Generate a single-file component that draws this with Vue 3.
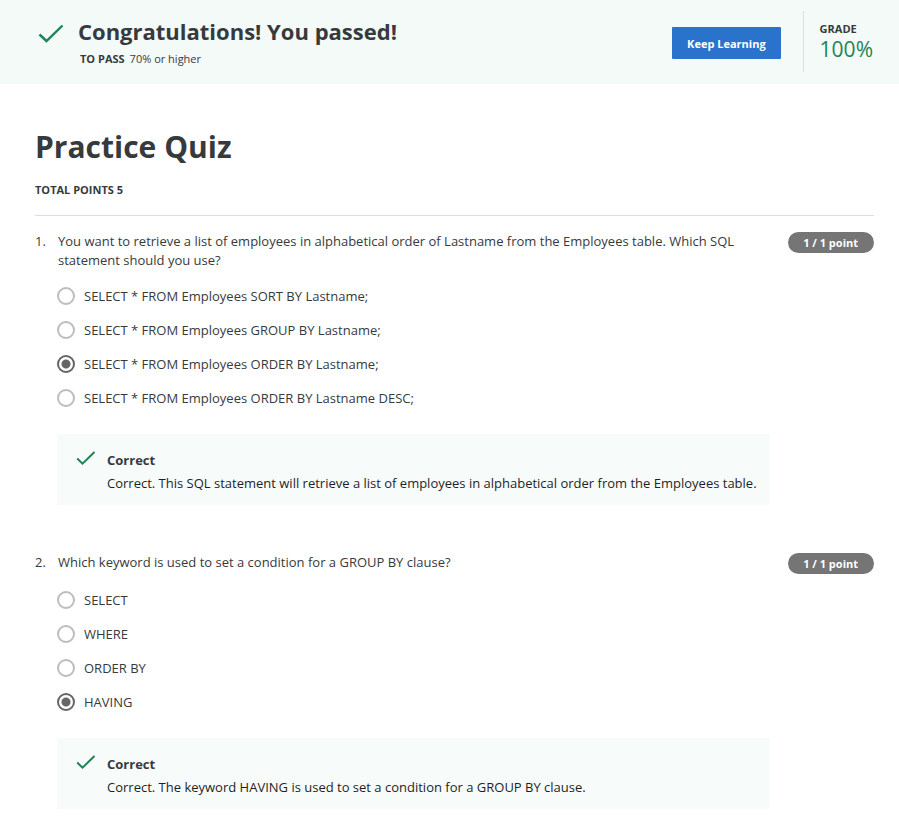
<script setup>
import { ref } from 'vue'

const questions = ref([
  {
    id: 1,
    prompt:
      'You want to retrieve a list of employees in alphabetical order of Lastname from the Employees table. Which SQL statement should you use?',
    options: [
      'SELECT * FROM Employees SORT BY Lastname;',
      'SELECT * FROM Employees GROUP BY Lastname;',
      'SELECT * FROM Employees ORDER BY Lastname;',
      'SELECT * FROM Employees ORDER BY Lastname DESC;',
    ],
    selected: 2,
    feedback:
      'Correct. This SQL statement will retrieve a list of employees in alphabetical order from the Employees table.',
  },
  {
    id: 2,
    prompt: 'Which keyword is used to set a condition for a GROUP BY clause?',
    options: ['SELECT', 'WHERE', 'ORDER BY', 'HAVING'],
    selected: 3,
    feedback: 'Correct. The keyword HAVING is used to set a condition for a GROUP BY clause.',
  },
])
</script>

<template>
  <div class="page">
    <header class="banner">
      <svg class="banner-check" viewBox="0 0 26 20" aria-hidden="true">
        <path d="M1.5 10.5 L8.5 17 L24.5 1.5" />
      </svg>
      <div class="banner-text">
        <h2>Congratulations! You passed!</h2>
        <p><strong>TO PASS</strong><span>70% or higher</span></p>
      </div>
      <button type="button" class="keep">Keep Learning</button>
      <div class="grade">
        <span class="grade-label">GRADE</span>
        <span class="grade-value">100%</span>
      </div>
    </header>

    <main class="quiz">
      <h1>Practice Quiz</h1>
      <p class="total">TOTAL POINTS 5</p>

      <section v-for="q in questions" :key="q.id" class="question">
        <div class="number">{{ q.id }}.</div>
        <p :id="`prompt-${q.id}`" class="prompt">{{ q.prompt }}</p>
        <div class="points"><span class="pill">1 / 1 point</span></div>
        <div class="answer">
          <div class="options" role="radiogroup" :aria-labelledby="`prompt-${q.id}`">
            <label v-for="(option, i) in q.options" :key="i" class="option" :for="`q${q.id}-${i}`">
              <input :id="`q${q.id}-${i}`" v-model="q.selected" type="radio" :name="`q${q.id}`" :value="i" />
              <span>{{ option }}</span>
            </label>
          </div>
          <div class="feedback">
            <svg class="check" viewBox="0 0 20 16" aria-hidden="true">
              <path d="M1.2 8.5 L6.5 13.7 L18.5 2" />
            </svg>
            <div>
              <strong>Correct</strong>
              <p>{{ q.feedback }}</p>
            </div>
          </div>
        </div>
      </section>
    </main>
  </div>
</template>

<style>
body {
  margin: 0;
  background: #fff;
}
</style>

<style scoped>
.page {
  font-family: "Open Sans", "Noto Sans", sans-serif;
  font-size: 13px;
  line-height: 19px;
  color: #373a3c;
}

h1,
h2,
p {
  margin: 0;
}

.banner {
  display: flex;
  align-items: flex-start;
  padding: 11px 26px 12px 38px;
  background: #f3faf8;
}

.banner-check {
  width: 26px;
  height: 20px;
  margin: 13px 14px 0 0;
  flex: none;
}

.banner-check path,
.check path {
  fill: none;
  stroke: #1f8354;
}

.banner-check path {
  stroke-width: 2.4;
}

.banner-text {
  flex: 1;
  padding-top: 5px;
}

h2 {
  font-size: 22px;
  line-height: 30px;
  font-weight: 700;
}

.banner-text p {
  display: flex;
  gap: 5px;
  padding: 4px 0 0 2px;
  font-size: 11px;
  line-height: 18px;
}

.keep {
  height: 32px;
  margin: 16px 22px 0 0;
  padding: 1px 15px 0;
  border: 0;
  border-radius: 1px;
  background: #2a73cc;
  color: #fff;
  font-family: inherit;
  font-size: 11px;
  font-weight: 700;
  cursor: pointer;
}

.grade {
  display: flex;
  flex-direction: column;
  box-sizing: border-box;
  height: 61px;
  padding: 10px 0 0 16px;
  border-left: 1px solid #dcdfde;
}

.grade-label {
  font-size: 11px;
  line-height: 16px;
  font-weight: 700;
}

.grade-value {
  font-size: 21px;
  line-height: 24px;
  color: #1f8354;
}

.quiz {
  padding: 42px 25px 16px 35px;
}

h1 {
  font-size: 30px;
  line-height: 42px;
  font-weight: 700;
}

.total {
  padding: 13px 0 16px;
  border-bottom: 1px solid #dedede;
  font-size: 11px;
  line-height: 18px;
  font-weight: 700;
}

.question {
  display: grid;
  grid-template-columns: 22px minmax(0, 1fr) auto;
  padding-top: 16px;
}

.question + .question {
  padding-top: 48px;
}

.prompt {
  padding: 0 16px 0 1px;
}

.points {
  padding-left: 18px;
}

.pill {
  display: block;
  padding: 0 16px 0 15px;
  border-radius: 11px;
  background: #757575;
  color: #fff;
  font-size: 11px;
  font-weight: 700;
  line-height: 21px;
}

.answer {
  grid-column: 2;
  padding-top: 9px;
}

.option {
  display: flex;
  align-items: center;
  gap: 9px;
  height: 34px;
  cursor: pointer;
}

.option input {
  appearance: none;
  box-sizing: border-box;
  width: 18px;
  height: 18px;
  margin: 0;
  border: 2px solid #bdbdbd;
  border-radius: 50%;
  background: #fff;
  flex: none;
}

.option input:checked {
  border-color: #666;
  background: radial-gradient(circle, #666 4px, #fff 5px);
}

.feedback {
  display: flex;
  gap: 11px;
  margin-top: 19px;
  padding: 16px 8px 10px 19px;
  background: #f7fbfa;
}

.check {
  width: 20px;
  height: 16px;
  flex: none;
}

.check path {
  stroke-width: 2;
}

.feedback strong {
  display: block;
  line-height: 21px;
}

.feedback p {
  color: #1f1f1f;
  line-height: 24px;
}
</style>
